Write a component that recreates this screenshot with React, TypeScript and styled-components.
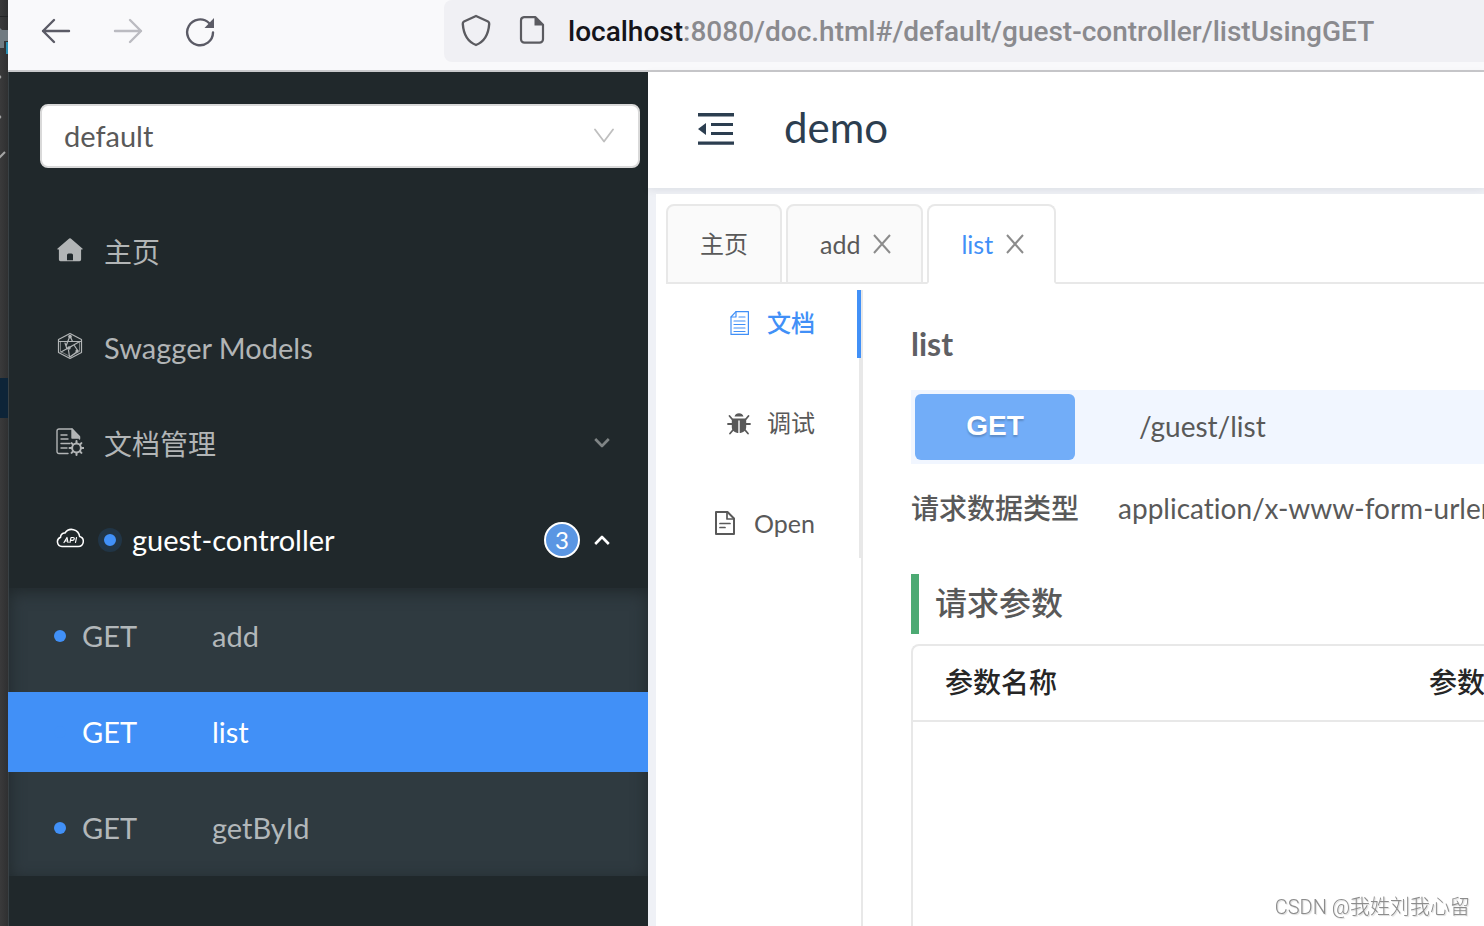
import React from "react";
import styled, { createGlobalStyle, css } from "styled-components";

const latin = `Lato, "Noto Sans CJK SC", sans-serif`;

const GlobalStyle = createGlobalStyle`
  *, *::before, *::after { box-sizing: border-box; }
  body {
    margin: 0;
    background: #333436;
    font-family: ${latin};
    font-variant-ligatures: none;
    color: #595959;
  }
  h1, h2, h3, p, ul, dl, dd { margin: 0; padding: 0; }
  ul { list-style: none; }
  button, select { font: inherit; }
  svg { display: block; flex: none; }
`;

const Screen = styled.div`
  display: flex;
  height: 100vh;
  overflow: hidden;
`;

const EditorEdge = styled.div`
  flex: none;
  width: 8px;
  background: linear-gradient(90deg, #3a3a3b, #2f3031);
`;

const EditorSelection = styled.div`
  height: 40px;
  margin-top: 218px;
  background: #0d2438;
`;

const Browser = styled.div`
  flex: 1;
  min-width: 0;
  display: flex;
  flex-direction: column;
`;

const Toolbar = styled.header`
  flex: none;
  display: flex;
  height: 72px;
  padding: 0 0 8px 32px;
  background: #f9f9fb;
  border-bottom: 2px solid #c9c9cc;
`;

const NavButtons = styled.nav`
  flex: none;
  display: flex;
  align-items: center;
  gap: 40px;
  width: 404px;
  padding-top: 2px;
`;

const IconButton = styled.button`
  display: flex;
  padding: 0;
  border: 0;
  background: none;
  color: #5b5b66;

  &:disabled { color: #bbbbc1; }
`;

const AddressBar = styled.div`
  flex: 1;
  min-width: 0;
  display: flex;
  align-items: center;
  gap: 24px;
  padding-left: 16px;
  background: #f0f0f4;
  border-radius: 8px 0 0 8px;
  color: #5b5b60;
`;

const Address = styled.div`
  margin-left: -4px;
  padding-top: 2px;
  font-family: Roboto, sans-serif;
  font-size: 28px;
  line-height: 32px;
  font-weight: 500;
  color: #8a8a8e;
  white-space: nowrap;

  b { font-weight: 500; color: #15141a; }
`;

const Page = styled.div`
  flex: 1;
  min-height: 0;
  display: flex;
`;

const Sidebar = styled.aside`
  flex: none;
  width: 640px;
  padding-top: 32px;
  background: #20282b;
  border-left: 1px solid #394145;
`;

const GroupPicker = styled.label`
  position: relative;
  display: block;
  margin: 0 8px 36px 31px;
  color: #bfbfbf;

  svg {
    position: absolute;
    right: 26px;
    top: 24px;
    pointer-events: none;
  }
`;

const GroupSelect = styled.select`
  appearance: none;
  display: block;
  width: 100%;
  height: 64px;
  padding: 0 22px 2px;
  border: 2px solid #d9d9d9;
  border-radius: 8px;
  background: #fff;
  color: #595959;
  font-size: 29px;
`;

const Menu = styled.nav`
  display: flow-root;
`;

const entryText = css`
  display: flex;
  align-items: center;
  height: 80px;
  font-size: 29px;
  line-height: 40px;
  text-decoration: none;
  white-space: nowrap;

  &:lang(zh) { font-size: 28px; }
`;

const MenuEntry = styled.a<{ $open?: boolean }>`
  ${entryText}
  margin: 8px 0 16px;
  padding: 0 38px 0 47px;
  color: ${(p) => (p.$open ? "#fff" : "#b2b5b6")};
`;

const EntryIcon = styled.span`
  flex: none;
  width: 48px;
  padding-bottom: 4px;
`;

const EntryLabel = styled.span`
  flex: 1;
`;

const StatusDot = styled.span`
  flex: none;
  width: 24px;
  height: 24px;
  margin: 0 10px 0 -6px;
  border: 6px solid #213546;
  border-radius: 50%;
  background: #4190f7;
`;

const CountBadge = styled.span`
  width: 36px;
  height: 36px;
  margin-right: 14px;
  border: 2px solid #fff;
  border-radius: 50%;
  background: #5a96e3;
  font-size: 24px;
  line-height: 32px;
  text-align: center;
`;

const Submenu = styled.ul`
  display: flex;
  flex-direction: column;
  gap: 16px;
  margin-top: -8px;
  padding: 8px 0;
  background: #2f3a40;
  box-shadow: inset 0 4px 16px #20282b;
`;

const Operation = styled.a<{ $active?: boolean }>`
  ${entryText}
  margin-left: -1px;
  padding-left: 46px;
  color: ${(p) => (p.$active ? "#fff" : "#b2b7ba")};
  background: ${(p) => (p.$active ? "#4190f7" : "transparent")};

  &::before {
    content: "";
    width: 12px;
    height: 12px;
    margin-right: 16px;
    border-radius: 50%;
    background: #4190f7;
  }
`;

const Verb = styled.span`
  width: 130px;
`;

const Main = styled.main`
  flex: 1;
  min-width: 0;
  display: flex;
  flex-direction: column;
  background: #eff1f6;
`;

const TitleBar = styled.div`
  flex: none;
  display: flex;
  align-items: center;
  gap: 50px;
  height: 116px;
  padding: 0 50px 2px;
  background: #fff;
  box-shadow: 0 2px 8px rgba(0, 21, 41, 0.08);
`;

const FoldButton = styled(IconButton)`
  color: #2c3e50;
`;

const Title = styled.h1`
  padding-bottom: 4px;
  font-size: 42px;
  line-height: 56px;
  font-weight: 400;
  color: #2c3e50;
`;

const Workspace = styled.div`
  flex: 1;
  min-height: 0;
  display: flex;
  flex-direction: column;
  margin: 6px 0 0 8px;
  padding: 10px 0 0 10px;
  background: #fff;
  overflow: hidden;
`;

const TabBar = styled.div`
  flex: none;
  display: flex;
  gap: 4px;
  height: 80px;
  box-shadow: inset 0 -2px #e8e8e8;
`;

const Tab = styled.div<{ $active?: boolean }>`
  display: flex;
  align-items: center;
  gap: 13px;
  padding: 0 32px;
  border: 2px solid #e8e8e8;
  border-bottom-color: ${(p) => (p.$active ? "#fff" : "#e8e8e8")};
  border-radius: 8px 8px 0 0;
  background: ${(p) => (p.$active ? "#fff" : "#fafafa")};
  color: #8c8c8c;
`;

const TabLabel = styled.button<{ $active?: boolean }>`
  padding: 0;
  border: 0;
  background: none;
  font-size: 25px;
  line-height: 36px;
  color: ${(p) => (p.$active ? "#4190f7" : "#595959")};

  &:lang(zh) { font-size: 24px; }
`;

const CloseButton = styled(IconButton)`
  margin-right: -2px;
  color: inherit;
`;

const Columns = styled.div`
  flex: 1;
  min-height: 0;
  display: flex;
  padding-top: 6px;
`;

const SideTabs = styled.div`
  flex: none;
  display: flex;
  flex-direction: column;
  gap: 32px;
  align-self: flex-start;
  width: 195px;
  border-right: 2px solid #e8e8e8;
`;

const SideTab = styled.button<{ $active?: boolean }>`
  display: flex;
  align-items: center;
  justify-content: flex-end;
  gap: 16px;
  height: 68px;
  margin-right: -2px;
  padding: 0 42px 2px 0;
  border: 0;
  border-right: 4px solid ${(p) => (p.$active ? "#4190f7" : "transparent")};
  background: none;
  color: ${(p) => (p.$active ? "#4190f7" : "#595959")};
  font-size: 25px;
  line-height: 36px;
  font-weight: ${(p) => (p.$active ? 500 : 400)};

  &:lang(zh) { font-size: 24px; }
`;

const Doc = styled.section`
  flex: 1;
  min-width: 0;
  padding: 30px 0 0 48px;
  border-left: 2px solid #e8e8e8;
  overflow: hidden;
`;

const DocName = styled.h2`
  height: 70px;
  font-size: 32px;
  line-height: 48px;
  font-weight: 700;
  color: #5f6064;
`;

const Endpoint = styled.div`
  display: flex;
  align-items: center;
  gap: 64px;
  height: 74px;
  padding: 4px;
  background: #f1f6ff;
  font-size: 28px;
`;

const MethodBadge = styled.span`
  width: 160px;
  height: 66px;
  border-radius: 6px;
  background: #72adf8;
  color: #fff;
  font-family: "Liberation Sans", sans-serif;
  font-weight: 700;
  line-height: 64px;
  text-align: center;
  text-shadow: 0 2px 2px rgba(0, 0, 0, 0.2);
`;

const EndpointPath = styled.span`
  padding-bottom: 2px;
`;

const Facts = styled.dl`
  display: flex;
  gap: 39px;
  height: 110px;
  padding-top: 23px;
  font-size: 28px;
  line-height: 42px;
  white-space: nowrap;

  dt { font-weight: 500; }
`;

const SectionTitle = styled.h3`
  height: 60px;
  margin-bottom: 10px;
  padding-left: 16px;
  border-left: 8px solid #4caa73;
  font-size: 32px;
  line-height: 58px;
  font-weight: 500;
`;

const TableFrame = styled.div`
  height: 600px;
  border: 2px solid #e8e8e8;
  border-right: 0;
  border-radius: 8px 0 0 0;
  overflow: hidden;
`;

const ParamTable = styled.table`
  width: 100%;
  table-layout: fixed;
  border-collapse: separate;
  border-spacing: 0;

  th {
    height: 76px;
    padding: 0 0 2px 32px;
    border-bottom: 2px solid #e8e8e8;
    color: #262626;
    font-size: 28px;
    line-height: 42px;
    font-weight: 500;
    text-align: left;
    white-space: nowrap;
  }
  th:first-child { width: 484px; }
`;

const Watermark = styled.div`
  position: fixed;
  right: 14px;
  bottom: 4px;
  font-family: Roboto, "Noto Sans CJK SC", sans-serif;
  font-size: 20px;
  line-height: 30px;
  font-weight: 300;
  color: #8c8c8c;
  text-shadow: 1px 1px 1px rgba(0, 0, 0, 0.15);
`;

const stroke = (w: number) => ({
  fill: "none",
  stroke: "currentColor",
  strokeWidth: w,
  strokeLinecap: "round" as const,
  strokeLinejoin: "round" as const,
});

const EditorMarks = () => (
  <svg width="8" height="160" viewBox="0 0 8 160">
    <path d="M0 16.5h8" stroke="#232426" />
    <path d="M0 28l2 2h6v11H4v7H0z" fill="#717b81" />
    <path d="M6 42h2v12H6z" fill="#2b8fb3" />
    <path d="M0 75l1.500 2-1.500 2zM0 115l1.500 2-1.500 2z" fill="#a5a5a5" />
    <path d="M-1 158l6-6" stroke="#a5a5a5" strokeWidth="2" />
  </svg>
);

const BackIcon = () => (
  <svg width="32" height="28" viewBox="0 0 32 28" {...stroke(2.4)}>
    <path d="M29 13H3M14 2L3 13l11 11" />
  </svg>
);

const ForwardIcon = () => (
  <svg width="32" height="28" viewBox="0 0 32 28" {...stroke(2.4)}>
    <path d="M3 13h26M18 2l11 11-11 11" />
  </svg>
);

const ReloadIcon = () => (
  <svg width="32" height="32" viewBox="0 0 32 32" {...stroke(2.4)}>
    <path d="M29 16.500A12.900 12.900 0 1 1 25 7" />
    <path d="M30 2v10h-9.500z" fill="currentColor" stroke="none" />
  </svg>
);

const ShieldIcon = () => (
  <svg width="32" height="34" viewBox="0 0 32 34" {...stroke(2.4)}>
    <path d="M16 2L28 7.500c1.200.6 1.300 1.200 1.200 2.500C28.500 19.500 25 27.500 16 31 7 27.500 3.500 19.500 2.800 10 2.700 8.700 2.800 8.100 4 7.500z" />
  </svg>
);

const PageIcon = () => (
  <svg width="32" height="32" viewBox="0 0 32 32" {...stroke(2.2)}>
    <path d="M8 2.200h11.500l7.500 7.500v14.500a3.500 3.500 0 0 1-3.500 3.500h-15A3.500 3.500 0 0 1 5 24.200V5.500A3.300 3.300 0 0 1 8 2.200z" />
    <path d="M18.500 1.500v9h9z" fill="currentColor" stroke="none" />
  </svg>
);

const SelectArrow = () => (
  <svg width="20" height="16" viewBox="0 0 20 16" {...stroke(1.8)}>
    <path d="M1 1.500l9 12 9-12" />
  </svg>
);

const HomeIcon = () => (
  <svg width="28" height="28" viewBox="0 0 28 28" fill="currentColor">
    <path d="M13.200 2.600a1.200 1.200 0 0 1 1.600 0L26.400 12.400c.5.500.3 1.100-.4 1.100h-.9v10.100a1.600 1.600 0 0 1-1.600 1.600H17v-6.200a1.500 1.500 0 0 0-1.500-1.500h-3A1.500 1.500 0 0 0 11 19v6.200H4.500a1.600 1.600 0 0 1-1.600-1.600V13.500H2c-.7 0-.9-.6-.4-1.100zM11 24.200h6v1h-6z" />
  </svg>
);

const ModelsIcon = () => (
  <svg width="28" height="28" viewBox="0 0 28 28" {...stroke(1.2)}>
    <path d="M14 1.500L25.500 7.500v13L14 26.500 2.500 20.500v-13z" />
    <path d="M4.500 10v9.500l9.500 5 9.500-5V10" strokeWidth="0.6" />
    <path d="M3 9.500h22M14 4l-4 10M14 4l2.500 5.500M5 20l18-10M9 11l2 6 5-3M13.500 25l-1-7M18 13l4 6-8 6" />
    <circle cx="14" cy="4.500" r="1.200" fill="currentColor" />
    <circle cx="13" cy="16" r="1.100" fill="currentColor" />
    <circle cx="21" cy="19" r="1" fill="currentColor" />
  </svg>
);

const DocSettingsIcon = () => (
  <svg width="28" height="28" viewBox="0 0 28 28" {...stroke(1.400)}>
    <path d="M12 25.500H3A2 2 0 0 1 1 23.500V3a2 2 0 0 1 2-2h13l7.500 7.500V11" />
    <path d="M16 1l7.500 9H16z" fill="currentColor" />
    <path d="M5 7h6M5 11h7M5 15.500h9M5 20h6" />
    <circle cx="20.500" cy="20" r="4.400" strokeWidth="2" />
    <path
      d="M20.500 13v2M20.500 25v2M13.500 20h2M25.500 20h2M15.600 15.100l1.400 1.400M24 23.500l1.400 1.400M15.600 24.900l1.400-1.400M24 16.500l1.400-1.400"
      strokeWidth="2"
    />
  </svg>
);

const ApiIcon = () => (
  <svg width="28" height="28" viewBox="0 0 28 28" {...stroke(1.500)}>
    <path d="M6 22.500h16.200a5.100 5.100 0 0 0 1.400-10A8 8 0 0 0 9 9a4 4 0 0 0-4.400 4.200A4.800 4.800 0 0 0 6 22.500z" />
    <path d="M8 18.500l3-5 1 5M9 17h2.500M14 18.500l1-5h2c2 0 1.500 2.800-.5 2.800h-2M19.500 18.500l1-5" strokeWidth="1.200" />
  </svg>
);

const CaretIcon = ({ up }: { up?: boolean }) => (
  <svg width="16" height="12" viewBox="0 0 16 12" {...stroke(2.600)} strokeLinecap="butt">
    <path d={up ? "M1.200 10L8 3l6.800 7" : "M1.200 1L8 8l6.800-7"} opacity={up ? 1 : 0.65} />
  </svg>
);

const FoldIcon = () => (
  <svg width="36" height="34" viewBox="0 0 36 34" fill="currentColor">
    <path d="M0 1h36v3.400H0zM13 11h22v3H13zM13 20h22v3H13zM0 29.400h36v3.400H0zM0 17l8-6v12z" />
  </svg>
);

const CloseIcon = () => (
  <svg width="18" height="20" viewBox="0 0 18 20" {...stroke(2)} strokeLinecap="butt">
    <path d="M1 1l16 18M17 1l-16 18" />
  </svg>
);

const DocLinesIcon = () => (
  <svg width="24" height="24" viewBox="0 0 24 24" {...stroke(1.200)}>
    <path d="M9 .6h12.400v22.800H4V6z" />
    <path d="M9 .6V6H4" />
    <path d="M12 6h6M7 10h11M7 13.500h11M7 17h11M7 20.500h11" />
  </svg>
);

const BugIcon = () => (
  <svg width="24" height="24" viewBox="0 0 24 24" {...stroke(1.800)}>
    <path d="M7.500 5.500a4.800 4.800 0 0 1 9 0z" fill="currentColor" stroke="none" />
    <path d="M4.800 7.500h14.400V16c0 3.500-2.800 6-7.200 6s-7.200-2.500-7.200-6z" fill="currentColor" stroke="none" />
    <path d="M12 10v12" stroke="#fff" strokeWidth="1.400" />
    <path d="M5 8L2.500 5M19 8l2.500-3M5 13H1M19 13h4M6 19l-3 3.500M18 19l3 3.500" />
  </svg>
);

const FileIcon = () => (
  <svg width="24" height="24" viewBox="0 0 24 24" {...stroke(2)}>
    <path d="M2 1h11.500L20 7.500V23H2z" />
    <path d="M13 1v7h7M6 12.500h10M6 16.500h5" strokeWidth="1.700" />
  </svg>
);

const operations = [
  { verb: "GET", name: "add" },
  { verb: "GET", name: "list", active: true },
  { verb: "GET", name: "getById" },
];

export default function App() {
  return (
    <>
      <GlobalStyle />
      <Screen>
        <EditorEdge>
          <EditorMarks />
          <EditorSelection />
        </EditorEdge>
        <Browser>
          <Toolbar>
            <NavButtons>
              <IconButton aria-label="Back"><BackIcon /></IconButton>
              <IconButton aria-label="Forward" disabled><ForwardIcon /></IconButton>
              <IconButton aria-label="Reload"><ReloadIcon /></IconButton>
            </NavButtons>
            <AddressBar>
              <ShieldIcon />
              <PageIcon />
              <Address>
                <b>localhost</b>:8080/doc.html#/default/guest-controller/listUsingGET
              </Address>
            </AddressBar>
          </Toolbar>
          <Page>
            <Sidebar>
              <GroupPicker>
                <GroupSelect aria-label="Group">
                  <option>default</option>
                </GroupSelect>
                <SelectArrow />
              </GroupPicker>
              <Menu>
                <MenuEntry href="#home" lang="zh">
                  <EntryIcon><HomeIcon /></EntryIcon>
                  <EntryLabel>主页</EntryLabel>
                </MenuEntry>
                <MenuEntry href="#models">
                  <EntryIcon><ModelsIcon /></EntryIcon>
                  <EntryLabel>Swagger Models</EntryLabel>
                </MenuEntry>
                <MenuEntry href="#docs" lang="zh">
                  <EntryIcon><DocSettingsIcon /></EntryIcon>
                  <EntryLabel>文档管理</EntryLabel>
                  <CaretIcon />
                </MenuEntry>
                <MenuEntry href="#guest" $open>
                  <EntryIcon><ApiIcon /></EntryIcon>
                  <StatusDot />
                  <EntryLabel>guest-controller</EntryLabel>
                  <CountBadge>3</CountBadge>
                  <CaretIcon up />
                </MenuEntry>
                <Submenu>
                  {operations.map((op) => (
                    <li key={op.name}>
                      <Operation href={`#${op.name}`} $active={op.active}>
                        <Verb>{op.verb}</Verb>
                        {op.name}
                      </Operation>
                    </li>
                  ))}
                </Submenu>
              </Menu>
            </Sidebar>
            <Main>
              <TitleBar>
                <FoldButton aria-label="Collapse menu"><FoldIcon /></FoldButton>
                <Title>demo</Title>
              </TitleBar>
              <Workspace>
                <TabBar>
                  <Tab><TabLabel lang="zh">主页</TabLabel></Tab>
                  <Tab>
                    <TabLabel>add</TabLabel>
                    <CloseButton aria-label="Close add"><CloseIcon /></CloseButton>
                  </Tab>
                  <Tab $active>
                    <TabLabel $active>list</TabLabel>
                    <CloseButton aria-label="Close list"><CloseIcon /></CloseButton>
                  </Tab>
                </TabBar>
                <Columns>
                  <SideTabs>
                    <SideTab $active lang="zh"><DocLinesIcon />文档</SideTab>
                    <SideTab lang="zh"><BugIcon />调试</SideTab>
                    <SideTab><FileIcon />Open</SideTab>
                  </SideTabs>
                  <Doc>
                    <DocName>list</DocName>
                    <Endpoint>
                      <MethodBadge>GET</MethodBadge>
                      <EndpointPath>/guest/list</EndpointPath>
                    </Endpoint>
                    <Facts>
                      <dt>请求数据类型</dt>
                      <dd>application/x-www-form-urlencoded</dd>
                    </Facts>
                    <SectionTitle>请求参数</SectionTitle>
                    <TableFrame>
                      <ParamTable>
                        <thead>
                          <tr>
                            <th>参数名称</th>
                            <th>参数说明</th>
                          </tr>
                        </thead>
                      </ParamTable>
                    </TableFrame>
                  </Doc>
                </Columns>
              </Workspace>
            </Main>
          </Page>
        </Browser>
        <Watermark>CSDN @我姓刘我心留</Watermark>
      </Screen>
    </>
  );
}
